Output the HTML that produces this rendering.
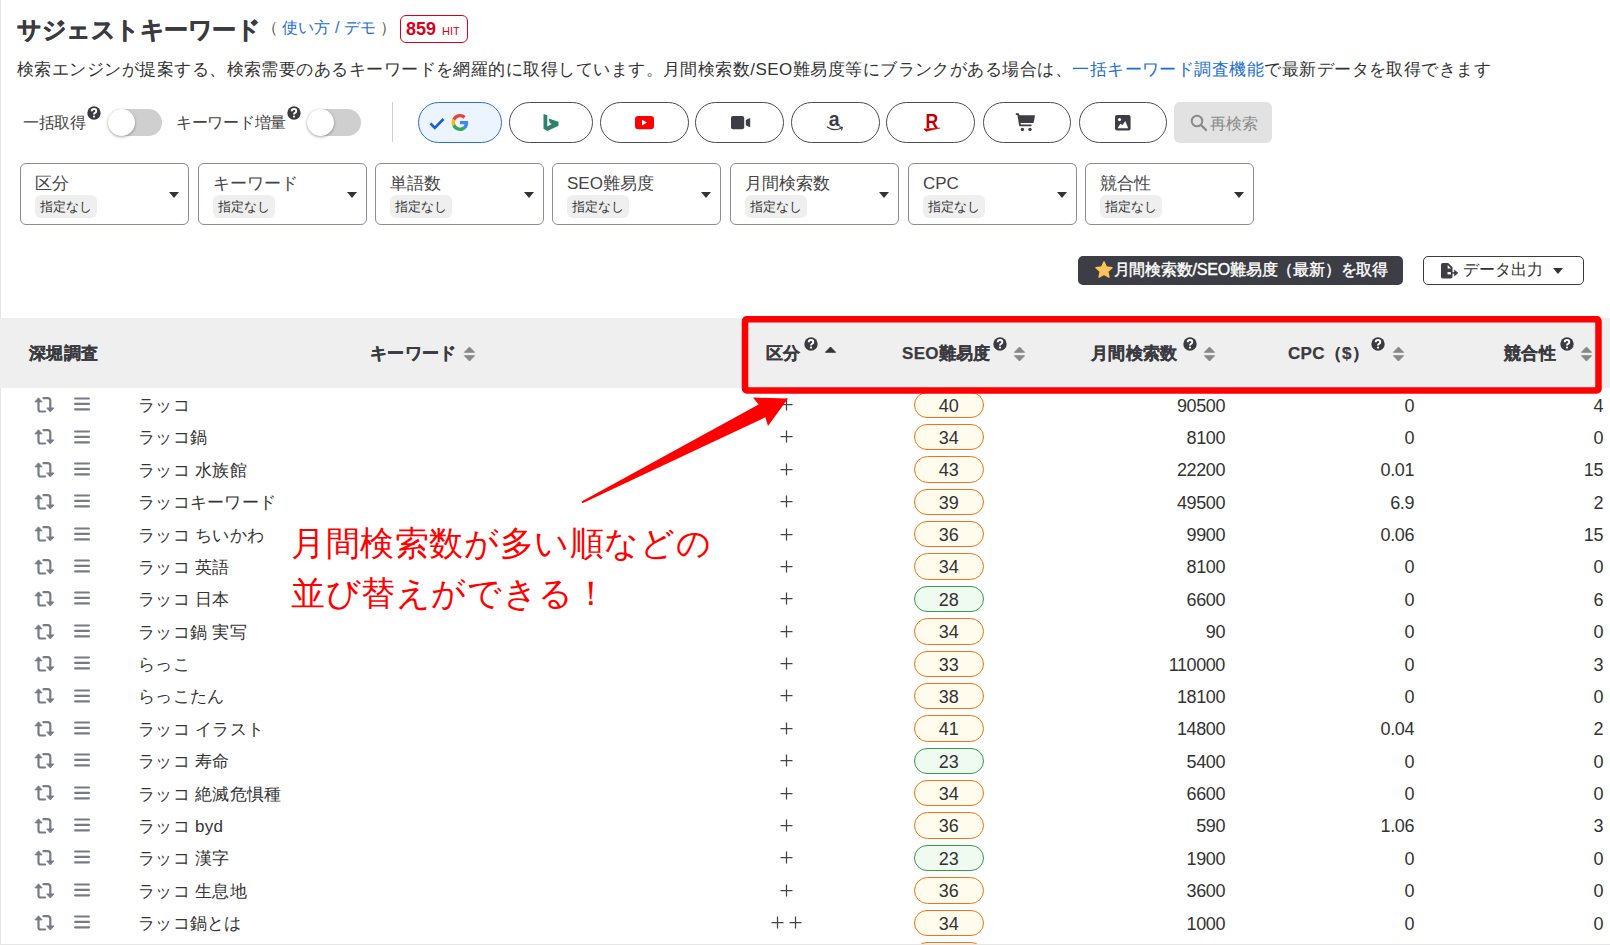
<!DOCTYPE html>
<html><head><meta charset="utf-8">
<style>
*{box-sizing:border-box;margin:0;padding:0}
html,body{width:1610px;height:945px;overflow:hidden;background:#fff}
body{position:relative;font-family:"Liberation Sans",sans-serif;color:#333}
.a{position:absolute;white-space:nowrap;line-height:1}
.ic{position:absolute}
#lb{position:absolute;left:0;top:0;width:1px;height:945px;background:#e4e4e4}
#bb{position:absolute;left:0;top:944px;width:1610px;height:1px;background:#e6e6e6}
.title{left:17px;top:18.5px;font-size:23.7px;letter-spacing:-0.5px;font-weight:bold;color:#3a3a40;-webkit-text-stroke:0.5px #3a3a40}
.help{left:262px;top:20px;font-size:16px;color:#1e6fd0}
.help span{color:#555}
.badge{position:absolute;left:400px;top:15px;width:68px;height:28px;border:1.5px solid #d9001b;border-radius:6px}
.b859{left:406px;top:20px;font-size:18px;font-weight:bold;color:#d9001b}
.bhit{left:442px;top:26px;font-size:11px;color:#d9001b}
.desc{left:17px;top:61px;font-size:17px;letter-spacing:0.46px;color:#333}
.desc a{color:#1e6fd0;text-decoration:none}
.tgl{position:absolute;top:109px;width:54px;height:27px;border-radius:14px;background:#cfcfcf}
.tgl::after{content:"";position:absolute;left:0;top:0;width:27px;height:27px;border-radius:50%;background:#fff;box-shadow:0 1px 3px rgba(0,0,0,.35)}
.tl{top:115px;font-size:16px;letter-spacing:-0.3px;color:#444}
.q{position:absolute;width:13px;height:13px;border-radius:50%;background:#3a3a40;color:#fff;font-size:10px;font-weight:bold;text-align:center;line-height:13px}
.div{position:absolute;left:392px;top:102px;width:1px;height:40px;background:#d0d0d0}
.eb{position:absolute;top:102px;height:41px;border:1.3px solid #4a4a50;border-radius:21px;background:#fff}
.eb.on{border-color:#2a6fdb;background:#ecf4ff}
.re{position:absolute;left:1174px;top:102px;width:98px;height:41px;border-radius:6px;background:#e2e2e2}
.ret{left:1210px;top:115.5px;font-size:16px;color:#8a8a8a}
.flt{position:absolute;top:163px;width:169px;height:62px;border:1.3px solid #8c8c96;border-radius:6px}
.fl{position:absolute;left:14px;top:11px;font-size:17px;line-height:1;color:#444;white-space:nowrap}
.chip{position:absolute;left:14px;top:31px;width:62px;height:23px;border-radius:6px;background:#efefef;font-size:13px;line-height:23px;text-align:center;color:#333;white-space:nowrap}
.caret{position:absolute;left:148px;top:28px;width:0;height:0;border-left:5px solid transparent;border-right:5px solid transparent;border-top:6px solid #333}
.dbtn{position:absolute;left:1078px;top:256px;width:325px;height:29px;border-radius:5px;background:#3d3d45}
.dbt{left:1113.5px;top:262px;font-size:16px;letter-spacing:-0.2px;color:#fff;-webkit-text-stroke:0.4px #fff}
.obtn{position:absolute;left:1423px;top:256px;width:161px;height:29px;border-radius:5px;border:1.2px solid #3a3a40;background:#fff}
.obt{left:1463px;top:262px;font-size:16px;color:#333}
.thead{position:absolute;left:0;top:318px;width:1610px;height:70px;background:#efefef}
.th{top:345px;font-size:17px;font-weight:bold;letter-spacing:0.3px;color:#3a3a40;-webkit-text-stroke:0.25px #3a3a40}
.sort{position:absolute;width:13px;height:16px}
.row{position:absolute;left:0;width:1610px;height:32.375px}
.kw{position:absolute;left:138px;top:9px;font-size:17px;letter-spacing:0.3px;line-height:1;color:#333;white-space:nowrap}
.kb{position:absolute;left:770px;width:34px;top:7px;font-size:18px;line-height:1;color:#333;text-align:center;white-space:nowrap}
.seo{position:absolute;left:914px;top:3.6px;width:69.5px;height:26.3px;border-radius:13.5px;border:1.5px solid #f07416;background:#fffcee;font-size:18px;line-height:26.5px;text-align:center;color:#333}
.seo.g{border-color:#3a9a4a;background:#effaf0}
.num{position:absolute;top:8.5px;font-size:18px;letter-spacing:-0.4px;line-height:1;color:#333;text-align:right;white-space:nowrap}
.vol{right:385px}
.cpc{right:196px}
.comp{right:7px}
#ann{position:absolute;left:0;top:0}
.ann{left:291px;font-size:34px;letter-spacing:0.6px;color:#f00}
</style></head><body>
<div id="lb"></div>
<div class="a title">サジェストキーワード</div>
<div class="a help"><span>（</span> 使い方 / デモ <span>）</span></div>
<div class="badge"></div>
<div class="a b859">859</div>
<div class="a bhit">HIT</div>
<div class="a desc">検索エンジンが提案する、検索需要のあるキーワードを網羅的に取得しています。月間検索数/SEO難易度等にブランクがある場合は、<a>一括キーワード調査機能</a>で最新データを取得できます</div>

<div class="a tl" style="left:23px">一括取得</div>
<svg class="ic" style="left:87px;top:106px" width="14" height="14" viewBox="0 0 14 14"><circle cx="7" cy="7" r="6.7" fill="#3a3a42"/><path d="M4.7 5.3Q4.7 3 7 3Q9.3 3 9.3 5Q9.3 6.3 8 6.9Q7 7.4 7 8.4" fill="none" stroke="#fff" stroke-width="1.9"/><circle cx="7" cy="10.6" r="1.15" fill="#fff"/></svg>
<div class="tgl" style="left:108px"></div>
<div class="a tl" style="left:176px">キーワード増量</div>
<svg class="ic" style="left:287px;top:106px" width="14" height="14" viewBox="0 0 14 14"><circle cx="7" cy="7" r="6.7" fill="#3a3a42"/><path d="M4.7 5.3Q4.7 3 7 3Q9.3 3 9.3 5Q9.3 6.3 8 6.9Q7 7.4 7 8.4" fill="none" stroke="#fff" stroke-width="1.9"/><circle cx="7" cy="10.6" r="1.15" fill="#fff"/></svg>
<div class="tgl" style="left:307px"></div>
<div class="div"></div>

<div class="eb on" style="left:418px;width:84px"></div>
<svg class="ic" style="left:429px;top:117px" width="16" height="13" viewBox="0 0 16 13"><path d="M1.5 6.5L5.8 10.8L14.5 2" fill="none" stroke="#1a5fd0" stroke-width="2.6"/></svg>
<svg class="ic" style="left:451px;top:114px" width="18" height="17" viewBox="0 0 48 48"><path fill="#EA4335" d="M24 9.5c3.54 0 6.71 1.22 9.21 3.6l6.85-6.850C35.9 2.38 30.47 0 24 0 14.62 0 6.51 5.38 2.56 13.22l7.98 6.19C12.43 13.72 17.74 9.5 24 9.5z"/><path fill="#4285F4" d="M46.98 24.55c0-1.57-.15-3.090-.38-4.55H24v9.02h12.940c-.58 2.96-2.26 5.48-4.78 7.18l7.73 6c4.51-4.18 7.09-10.36 7.09-17.65z"/><path fill="#FBBC05" d="M10.53 28.59c-.48-1.45-.76-2.99-.76-4.59s.27-3.14.76-4.59l-7.98-6.19C.92 16.46 0 20.12 0 24c0 3.88.92 7.54 2.56 10.78l7.97-6.19z"/><path fill="#34A853" d="M24 48c6.48 0 11.93-2.13 15.89-5.81l-7.730-6c-2.15 1.45-4.92 2.3-8.16 2.3-6.26 0-11.57-4.22-13.47-9.91l-7.98 6.19C6.51 42.62 14.62 48 24 48z"/></svg>

<div class="eb" style="left:509px;width:84px"></div>
<svg class="ic" style="left:543px;top:114px" width="16" height="17" viewBox="0 0 15 17"><path d="M0 0L3.8 1.3V12.6L8.2 10.1L6.3 8.9L5.1 4.6L15 7.7V11.7L3.8 17L0 14.8Z" fill="#2e8070"/></svg>

<div class="eb" style="left:600px;width:89px"></div>
<svg class="ic" style="left:635px;top:116px" width="19" height="14" viewBox="0 0 19 14"><rect x="0" y="0" width="19" height="13.2" rx="3.2" fill="#f00"/><path d="M7 3.8L12 6.6L7 9.4Z" fill="#fff"/></svg>

<div class="eb" style="left:695px;width:89px"></div>
<svg class="ic" style="left:731px;top:116px" width="20" height="14" viewBox="0 0 20 14"><rect x="0" y="0" width="13.2" height="13.2" rx="2" fill="#3d3d45"/><path d="M14.8 4L18.4 2.2Q19.2 2 19.2 3V10.3Q19.2 11.2 18.4 11L14.8 9.2Z" fill="#3d3d45"/></svg>

<div class="eb" style="left:791px;width:89px"></div>
<svg class="ic" style="left:826px;top:112px" width="18" height="20" viewBox="0 0 18 20"><text x="2.7" y="14" font-family="Liberation Sans" font-weight="bold" font-size="19.5" fill="#3d3d45">a</text><path d="M1.3 15Q8.5 20 15.8 15.7" fill="none" stroke="#3d3d45" stroke-width="1.3" stroke-linecap="round"/><path d="M13.6 14.9L16.3 15.5L15.6 18" fill="none" stroke="#3d3d45" stroke-width="1.1" stroke-linecap="round"/></svg>

<div class="eb" style="left:886px;width:89px"></div>
<svg class="ic" style="left:922px;top:111px" width="20" height="22" viewBox="0 0 20 22"><text x="0" y="17" transform="translate(3.6 0) scale(0.88 1)" font-family="Liberation Sans" font-weight="bold" font-size="20" fill="#bf0000">R</text><path d="M1.8 17.9L17.8 17.1L4 20.3Z" fill="#bf0000" stroke="#bf0000" stroke-width="0.6" stroke-linejoin="round"/></svg>

<div class="eb" style="left:983px;width:88px"></div>
<svg class="ic" style="left:1015px;top:113px" width="21" height="19" viewBox="0 0 21 19"><path d="M0.8 1.1H3.2L5 12.3H16.5" fill="none" stroke="#3d3d45" stroke-width="1.8" stroke-linejoin="round"/><path d="M3.6 2.2H20L18.8 9.2Q18.6 10 17.8 10H4.8Z" fill="#3d3d45"/><circle cx="7.4" cy="16.4" r="1.7" fill="#3d3d45"/><circle cx="15" cy="16.4" r="1.7" fill="#3d3d45"/></svg>

<div class="eb" style="left:1079px;width:88px"></div>
<svg class="ic" style="left:1115px;top:115px" width="16" height="16" viewBox="0 0 16 16"><rect x="0" y="0" width="15.6" height="15.4" rx="2" fill="#3d3d45"/><circle cx="4.5" cy="4.6" r="1.6" fill="#fff"/><path d="M2.6 13.2L5.5 8.4L7.4 10.3L10.3 6L13.2 13.2Z" fill="#fff"/></svg>

<div class="re"></div>
<svg class="ic" style="left:1190px;top:114px" width="18" height="18" viewBox="0 0 18 18"><circle cx="7" cy="7" r="5.3" fill="none" stroke="#8a8a8a" stroke-width="2"/><path d="M11 11L16 16" stroke="#8a8a8a" stroke-width="2.4" stroke-linecap="round"/></svg>
<div class="a ret">再検索</div>

<div class="flt" style="left:20px"><div class="fl">区分</div><div class="chip">指定なし</div><div class="caret"></div></div>
<div class="flt" style="left:198px"><div class="fl">キーワード</div><div class="chip">指定なし</div><div class="caret"></div></div>
<div class="flt" style="left:375px"><div class="fl">単語数</div><div class="chip">指定なし</div><div class="caret"></div></div>
<div class="flt" style="left:552px"><div class="fl">SEO難易度</div><div class="chip">指定なし</div><div class="caret"></div></div>
<div class="flt" style="left:730px"><div class="fl">月間検索数</div><div class="chip">指定なし</div><div class="caret"></div></div>
<div class="flt" style="left:908px"><div class="fl">CPC</div><div class="chip">指定なし</div><div class="caret"></div></div>
<div class="flt" style="left:1085px"><div class="fl">競合性</div><div class="chip">指定なし</div><div class="caret"></div></div>

<div class="dbtn"></div>
<svg class="ic" style="left:1095px;top:261px" width="18" height="18" viewBox="0 0 17.4 17.4"><path d="M8.70 0.80 L10.99 5.84 L16.50 6.47 L12.41 10.21 L13.52 15.63 L8.70 12.90 L3.88 15.63 L4.99 10.21 L0.90 6.47 L6.41 5.84Z" fill="#fbc35a" stroke="#fbc35a" stroke-width="1.3" stroke-linejoin="round"/></svg>
<div class="a dbt">月間検索数/SEO難易度（最新）を取得</div>
<div class="obtn"></div>
<svg class="ic" style="left:1441px;top:263px" width="18" height="16" viewBox="0 0 18 16"><path d="M1.8 0H7.2L11.5 4.3V13.8Q11.5 15.6 9.7 15.6H1.8Q0 15.6 0 13.8V1.8Q0 0 1.8 0Z" fill="#3d3d45"/><path d="M6.7 2V5.6H10Z" fill="#fff"/><rect x="6.5" y="9.1" width="3.5" height="2.3" fill="#fff"/><rect x="9.8" y="9.2" width="4.5" height="1.5" fill="#3d3d45"/><path d="M13.4 7L16.9 9.95L13.4 12.9Z" fill="#3d3d45" stroke="#3d3d45" stroke-width="0.6" stroke-linejoin="round"/></svg>
<div class="a obt">データ出力</div>
<div class="caret" style="left:1553px;top:268px"></div>

<div class="thead"></div>
<div class="a th" style="left:29px">深堀調査</div>
<div class="a th" style="left:370px">キーワード</div>
<svg class="sort" style="left:463px;top:346px" viewBox="0 0 13 16"><path d="M6.5 1L11.6 6.3H1.4Z M6.5 15L11.6 9.7H1.4Z" fill="#888" stroke="#888" stroke-width="0.9" stroke-linejoin="round"/></svg>
<div class="a th" style="left:766px">区分</div>
<svg class="ic" style="left:804px;top:337px" width="14" height="14" viewBox="0 0 14 14"><circle cx="7" cy="7" r="6.7" fill="#3a3a42"/><path d="M4.7 5.3Q4.7 3 7 3Q9.3 3 9.3 5Q9.3 6.3 8 6.9Q7 7.4 7 8.4" fill="none" stroke="#fff" stroke-width="1.9"/><circle cx="7" cy="10.6" r="1.15" fill="#fff"/></svg>
<svg class="sort" style="left:824px;top:346px" viewBox="0 0 13 16"><path d="M6.5 1L11.6 6.3H1.4Z" fill="#333" stroke="#333" stroke-width="0.9" stroke-linejoin="round"/></svg>
<div class="a th" style="left:902px">SEO難易度</div>
<svg class="ic" style="left:993px;top:337px" width="14" height="14" viewBox="0 0 14 14"><circle cx="7" cy="7" r="6.7" fill="#3a3a42"/><path d="M4.7 5.3Q4.7 3 7 3Q9.3 3 9.3 5Q9.3 6.3 8 6.9Q7 7.4 7 8.4" fill="none" stroke="#fff" stroke-width="1.9"/><circle cx="7" cy="10.6" r="1.15" fill="#fff"/></svg>
<svg class="sort" style="left:1013px;top:346px" viewBox="0 0 13 16"><path d="M6.5 1L11.6 6.3H1.4Z M6.5 15L11.6 9.7H1.4Z" fill="#888" stroke="#888" stroke-width="0.9" stroke-linejoin="round"/></svg>
<div class="a th" style="left:1091px">月間検索数</div>
<svg class="ic" style="left:1183px;top:337px" width="14" height="14" viewBox="0 0 14 14"><circle cx="7" cy="7" r="6.7" fill="#3a3a42"/><path d="M4.7 5.3Q4.7 3 7 3Q9.3 3 9.3 5Q9.3 6.3 8 6.9Q7 7.4 7 8.4" fill="none" stroke="#fff" stroke-width="1.9"/><circle cx="7" cy="10.6" r="1.15" fill="#fff"/></svg>
<svg class="sort" style="left:1203px;top:346px" viewBox="0 0 13 16"><path d="M6.5 1L11.6 6.3H1.4Z M6.5 15L11.6 9.7H1.4Z" fill="#888" stroke="#888" stroke-width="0.9" stroke-linejoin="round"/></svg>
<div class="a th" style="left:1288px">CPC（$）</div>
<svg class="ic" style="left:1371px;top:337px" width="14" height="14" viewBox="0 0 14 14"><circle cx="7" cy="7" r="6.7" fill="#3a3a42"/><path d="M4.7 5.3Q4.7 3 7 3Q9.3 3 9.3 5Q9.3 6.3 8 6.9Q7 7.4 7 8.4" fill="none" stroke="#fff" stroke-width="1.9"/><circle cx="7" cy="10.6" r="1.15" fill="#fff"/></svg>
<svg class="sort" style="left:1392px;top:346px" viewBox="0 0 13 16"><path d="M6.5 1L11.6 6.3H1.4Z M6.5 15L11.6 9.7H1.4Z" fill="#888" stroke="#888" stroke-width="0.9" stroke-linejoin="round"/></svg>
<div class="a th" style="left:1504px">競合性</div>
<svg class="ic" style="left:1560px;top:337px" width="14" height="14" viewBox="0 0 14 14"><circle cx="7" cy="7" r="6.7" fill="#3a3a42"/><path d="M4.7 5.3Q4.7 3 7 3Q9.3 3 9.3 5Q9.3 6.3 8 6.9Q7 7.4 7 8.4" fill="none" stroke="#fff" stroke-width="1.9"/><circle cx="7" cy="10.6" r="1.15" fill="#fff"/></svg>
<svg class="sort" style="left:1580px;top:346px" viewBox="0 0 13 16"><path d="M6.5 1L11.6 6.3H1.4Z M6.5 15L11.6 9.7H1.4Z" fill="#888" stroke="#888" stroke-width="0.9" stroke-linejoin="round"/></svg>

<div class="row" style="top:388.0px">
<svg class="ic" style="left:34px;top:8.9px" width="21" height="16" viewBox="0 0 21 16"><path d="M4.5 3.5V12.2a2.3 2.3 0 0 0 2.3 2.3H11" fill="none" stroke="#777a88" stroke-width="2.2" stroke-linecap="round"/><path d="M0.9 4.9L4.5 0.8L8.1 4.9Z" fill="#777a88" stroke="#777a88" stroke-width="0.8" stroke-linejoin="round"/><path d="M9.5 1.2H14a2.3 2.3 0 0 1 2.3 2.3V11.5" fill="none" stroke="#777a88" stroke-width="2.2" stroke-linecap="round"/><path d="M12.7 10.9L16.3 15L19.9 10.9Z" fill="#777a88" stroke="#777a88" stroke-width="0.8" stroke-linejoin="round"/></svg>
<svg class="ic" style="left:74px;top:9.2px" width="17" height="14" viewBox="0 0 17 14"><path d="M1.2 1.5H14.9M1.2 6.9H14.9M1.2 12.4H14.9" stroke="#777a88" stroke-width="2.2" stroke-linecap="round"/></svg>
<div class="kw">ラッコ</div>
<svg class="ic" style="left:780px;top:10px" width="13" height="13" viewBox="0 0 13 13"><path d="M6.5 0.5V12.5M0.5 6.5H12.5" stroke="#444" stroke-width="1.25"/></svg>
<div class="seo o">40</div>
<div class="num vol">90500</div><div class="num cpc">0</div><div class="num comp">4</div>
</div>
<div class="row" style="top:420.375px">
<svg class="ic" style="left:34px;top:8.9px" width="21" height="16" viewBox="0 0 21 16"><path d="M4.5 3.5V12.2a2.3 2.3 0 0 0 2.3 2.3H11" fill="none" stroke="#777a88" stroke-width="2.2" stroke-linecap="round"/><path d="M0.9 4.9L4.5 0.8L8.1 4.9Z" fill="#777a88" stroke="#777a88" stroke-width="0.8" stroke-linejoin="round"/><path d="M9.5 1.2H14a2.3 2.3 0 0 1 2.3 2.3V11.5" fill="none" stroke="#777a88" stroke-width="2.2" stroke-linecap="round"/><path d="M12.7 10.9L16.3 15L19.9 10.9Z" fill="#777a88" stroke="#777a88" stroke-width="0.8" stroke-linejoin="round"/></svg>
<svg class="ic" style="left:74px;top:9.2px" width="17" height="14" viewBox="0 0 17 14"><path d="M1.2 1.5H14.9M1.2 6.9H14.9M1.2 12.4H14.9" stroke="#777a88" stroke-width="2.2" stroke-linecap="round"/></svg>
<div class="kw">ラッコ鍋</div>
<svg class="ic" style="left:780px;top:10px" width="13" height="13" viewBox="0 0 13 13"><path d="M6.5 0.5V12.5M0.5 6.5H12.5" stroke="#444" stroke-width="1.25"/></svg>
<div class="seo o">34</div>
<div class="num vol">8100</div><div class="num cpc">0</div><div class="num comp">0</div>
</div>
<div class="row" style="top:452.75px">
<svg class="ic" style="left:34px;top:8.9px" width="21" height="16" viewBox="0 0 21 16"><path d="M4.5 3.5V12.2a2.3 2.3 0 0 0 2.3 2.3H11" fill="none" stroke="#777a88" stroke-width="2.2" stroke-linecap="round"/><path d="M0.9 4.9L4.5 0.8L8.1 4.9Z" fill="#777a88" stroke="#777a88" stroke-width="0.8" stroke-linejoin="round"/><path d="M9.5 1.2H14a2.3 2.3 0 0 1 2.3 2.3V11.5" fill="none" stroke="#777a88" stroke-width="2.2" stroke-linecap="round"/><path d="M12.7 10.9L16.3 15L19.9 10.9Z" fill="#777a88" stroke="#777a88" stroke-width="0.8" stroke-linejoin="round"/></svg>
<svg class="ic" style="left:74px;top:9.2px" width="17" height="14" viewBox="0 0 17 14"><path d="M1.2 1.5H14.9M1.2 6.9H14.9M1.2 12.4H14.9" stroke="#777a88" stroke-width="2.2" stroke-linecap="round"/></svg>
<div class="kw">ラッコ 水族館</div>
<svg class="ic" style="left:780px;top:10px" width="13" height="13" viewBox="0 0 13 13"><path d="M6.5 0.5V12.5M0.5 6.5H12.5" stroke="#444" stroke-width="1.25"/></svg>
<div class="seo o">43</div>
<div class="num vol">22200</div><div class="num cpc">0.01</div><div class="num comp">15</div>
</div>
<div class="row" style="top:485.125px">
<svg class="ic" style="left:34px;top:8.9px" width="21" height="16" viewBox="0 0 21 16"><path d="M4.5 3.5V12.2a2.3 2.3 0 0 0 2.3 2.3H11" fill="none" stroke="#777a88" stroke-width="2.2" stroke-linecap="round"/><path d="M0.9 4.9L4.5 0.8L8.1 4.9Z" fill="#777a88" stroke="#777a88" stroke-width="0.8" stroke-linejoin="round"/><path d="M9.5 1.2H14a2.3 2.3 0 0 1 2.3 2.3V11.5" fill="none" stroke="#777a88" stroke-width="2.2" stroke-linecap="round"/><path d="M12.7 10.9L16.3 15L19.9 10.9Z" fill="#777a88" stroke="#777a88" stroke-width="0.8" stroke-linejoin="round"/></svg>
<svg class="ic" style="left:74px;top:9.2px" width="17" height="14" viewBox="0 0 17 14"><path d="M1.2 1.5H14.9M1.2 6.9H14.9M1.2 12.4H14.9" stroke="#777a88" stroke-width="2.2" stroke-linecap="round"/></svg>
<div class="kw">ラッコキーワード</div>
<svg class="ic" style="left:780px;top:10px" width="13" height="13" viewBox="0 0 13 13"><path d="M6.5 0.5V12.5M0.5 6.5H12.5" stroke="#444" stroke-width="1.25"/></svg>
<div class="seo o">39</div>
<div class="num vol">49500</div><div class="num cpc">6.9</div><div class="num comp">2</div>
</div>
<div class="row" style="top:517.5px">
<svg class="ic" style="left:34px;top:8.9px" width="21" height="16" viewBox="0 0 21 16"><path d="M4.5 3.5V12.2a2.3 2.3 0 0 0 2.3 2.3H11" fill="none" stroke="#777a88" stroke-width="2.2" stroke-linecap="round"/><path d="M0.9 4.9L4.5 0.8L8.1 4.9Z" fill="#777a88" stroke="#777a88" stroke-width="0.8" stroke-linejoin="round"/><path d="M9.5 1.2H14a2.3 2.3 0 0 1 2.3 2.3V11.5" fill="none" stroke="#777a88" stroke-width="2.2" stroke-linecap="round"/><path d="M12.7 10.9L16.3 15L19.9 10.9Z" fill="#777a88" stroke="#777a88" stroke-width="0.8" stroke-linejoin="round"/></svg>
<svg class="ic" style="left:74px;top:9.2px" width="17" height="14" viewBox="0 0 17 14"><path d="M1.2 1.5H14.9M1.2 6.9H14.9M1.2 12.4H14.9" stroke="#777a88" stroke-width="2.2" stroke-linecap="round"/></svg>
<div class="kw">ラッコ ちいかわ</div>
<svg class="ic" style="left:780px;top:10px" width="13" height="13" viewBox="0 0 13 13"><path d="M6.5 0.5V12.5M0.5 6.5H12.5" stroke="#444" stroke-width="1.25"/></svg>
<div class="seo o">36</div>
<div class="num vol">9900</div><div class="num cpc">0.06</div><div class="num comp">15</div>
</div>
<div class="row" style="top:549.875px">
<svg class="ic" style="left:34px;top:8.9px" width="21" height="16" viewBox="0 0 21 16"><path d="M4.5 3.5V12.2a2.3 2.3 0 0 0 2.3 2.3H11" fill="none" stroke="#777a88" stroke-width="2.2" stroke-linecap="round"/><path d="M0.9 4.9L4.5 0.8L8.1 4.9Z" fill="#777a88" stroke="#777a88" stroke-width="0.8" stroke-linejoin="round"/><path d="M9.5 1.2H14a2.3 2.3 0 0 1 2.3 2.3V11.5" fill="none" stroke="#777a88" stroke-width="2.2" stroke-linecap="round"/><path d="M12.7 10.9L16.3 15L19.9 10.9Z" fill="#777a88" stroke="#777a88" stroke-width="0.8" stroke-linejoin="round"/></svg>
<svg class="ic" style="left:74px;top:9.2px" width="17" height="14" viewBox="0 0 17 14"><path d="M1.2 1.5H14.9M1.2 6.9H14.9M1.2 12.4H14.9" stroke="#777a88" stroke-width="2.2" stroke-linecap="round"/></svg>
<div class="kw">ラッコ 英語</div>
<svg class="ic" style="left:780px;top:10px" width="13" height="13" viewBox="0 0 13 13"><path d="M6.5 0.5V12.5M0.5 6.5H12.5" stroke="#444" stroke-width="1.25"/></svg>
<div class="seo o">34</div>
<div class="num vol">8100</div><div class="num cpc">0</div><div class="num comp">0</div>
</div>
<div class="row" style="top:582.25px">
<svg class="ic" style="left:34px;top:8.9px" width="21" height="16" viewBox="0 0 21 16"><path d="M4.5 3.5V12.2a2.3 2.3 0 0 0 2.3 2.3H11" fill="none" stroke="#777a88" stroke-width="2.2" stroke-linecap="round"/><path d="M0.9 4.9L4.5 0.8L8.1 4.9Z" fill="#777a88" stroke="#777a88" stroke-width="0.8" stroke-linejoin="round"/><path d="M9.5 1.2H14a2.3 2.3 0 0 1 2.3 2.3V11.5" fill="none" stroke="#777a88" stroke-width="2.2" stroke-linecap="round"/><path d="M12.7 10.9L16.3 15L19.9 10.9Z" fill="#777a88" stroke="#777a88" stroke-width="0.8" stroke-linejoin="round"/></svg>
<svg class="ic" style="left:74px;top:9.2px" width="17" height="14" viewBox="0 0 17 14"><path d="M1.2 1.5H14.9M1.2 6.9H14.9M1.2 12.4H14.9" stroke="#777a88" stroke-width="2.2" stroke-linecap="round"/></svg>
<div class="kw">ラッコ 日本</div>
<svg class="ic" style="left:780px;top:10px" width="13" height="13" viewBox="0 0 13 13"><path d="M6.5 0.5V12.5M0.5 6.5H12.5" stroke="#444" stroke-width="1.25"/></svg>
<div class="seo g">28</div>
<div class="num vol">6600</div><div class="num cpc">0</div><div class="num comp">6</div>
</div>
<div class="row" style="top:614.625px">
<svg class="ic" style="left:34px;top:8.9px" width="21" height="16" viewBox="0 0 21 16"><path d="M4.5 3.5V12.2a2.3 2.3 0 0 0 2.3 2.3H11" fill="none" stroke="#777a88" stroke-width="2.2" stroke-linecap="round"/><path d="M0.9 4.9L4.5 0.8L8.1 4.9Z" fill="#777a88" stroke="#777a88" stroke-width="0.8" stroke-linejoin="round"/><path d="M9.5 1.2H14a2.3 2.3 0 0 1 2.3 2.3V11.5" fill="none" stroke="#777a88" stroke-width="2.2" stroke-linecap="round"/><path d="M12.7 10.9L16.3 15L19.9 10.9Z" fill="#777a88" stroke="#777a88" stroke-width="0.8" stroke-linejoin="round"/></svg>
<svg class="ic" style="left:74px;top:9.2px" width="17" height="14" viewBox="0 0 17 14"><path d="M1.2 1.5H14.9M1.2 6.9H14.9M1.2 12.4H14.9" stroke="#777a88" stroke-width="2.2" stroke-linecap="round"/></svg>
<div class="kw">ラッコ鍋 実写</div>
<svg class="ic" style="left:780px;top:10px" width="13" height="13" viewBox="0 0 13 13"><path d="M6.5 0.5V12.5M0.5 6.5H12.5" stroke="#444" stroke-width="1.25"/></svg>
<div class="seo o">34</div>
<div class="num vol">90</div><div class="num cpc">0</div><div class="num comp">0</div>
</div>
<div class="row" style="top:647.0px">
<svg class="ic" style="left:34px;top:8.9px" width="21" height="16" viewBox="0 0 21 16"><path d="M4.5 3.5V12.2a2.3 2.3 0 0 0 2.3 2.3H11" fill="none" stroke="#777a88" stroke-width="2.2" stroke-linecap="round"/><path d="M0.9 4.9L4.5 0.8L8.1 4.9Z" fill="#777a88" stroke="#777a88" stroke-width="0.8" stroke-linejoin="round"/><path d="M9.5 1.2H14a2.3 2.3 0 0 1 2.3 2.3V11.5" fill="none" stroke="#777a88" stroke-width="2.2" stroke-linecap="round"/><path d="M12.7 10.9L16.3 15L19.9 10.9Z" fill="#777a88" stroke="#777a88" stroke-width="0.8" stroke-linejoin="round"/></svg>
<svg class="ic" style="left:74px;top:9.2px" width="17" height="14" viewBox="0 0 17 14"><path d="M1.2 1.5H14.9M1.2 6.9H14.9M1.2 12.4H14.9" stroke="#777a88" stroke-width="2.2" stroke-linecap="round"/></svg>
<div class="kw">らっこ</div>
<svg class="ic" style="left:780px;top:10px" width="13" height="13" viewBox="0 0 13 13"><path d="M6.5 0.5V12.5M0.5 6.5H12.5" stroke="#444" stroke-width="1.25"/></svg>
<div class="seo o">33</div>
<div class="num vol">110000</div><div class="num cpc">0</div><div class="num comp">3</div>
</div>
<div class="row" style="top:679.375px">
<svg class="ic" style="left:34px;top:8.9px" width="21" height="16" viewBox="0 0 21 16"><path d="M4.5 3.5V12.2a2.3 2.3 0 0 0 2.3 2.3H11" fill="none" stroke="#777a88" stroke-width="2.2" stroke-linecap="round"/><path d="M0.9 4.9L4.5 0.8L8.1 4.9Z" fill="#777a88" stroke="#777a88" stroke-width="0.8" stroke-linejoin="round"/><path d="M9.5 1.2H14a2.3 2.3 0 0 1 2.3 2.3V11.5" fill="none" stroke="#777a88" stroke-width="2.2" stroke-linecap="round"/><path d="M12.7 10.9L16.3 15L19.9 10.9Z" fill="#777a88" stroke="#777a88" stroke-width="0.8" stroke-linejoin="round"/></svg>
<svg class="ic" style="left:74px;top:9.2px" width="17" height="14" viewBox="0 0 17 14"><path d="M1.2 1.5H14.9M1.2 6.9H14.9M1.2 12.4H14.9" stroke="#777a88" stroke-width="2.2" stroke-linecap="round"/></svg>
<div class="kw">らっこたん</div>
<svg class="ic" style="left:780px;top:10px" width="13" height="13" viewBox="0 0 13 13"><path d="M6.5 0.5V12.5M0.5 6.5H12.5" stroke="#444" stroke-width="1.25"/></svg>
<div class="seo o">38</div>
<div class="num vol">18100</div><div class="num cpc">0</div><div class="num comp">0</div>
</div>
<div class="row" style="top:711.75px">
<svg class="ic" style="left:34px;top:8.9px" width="21" height="16" viewBox="0 0 21 16"><path d="M4.5 3.5V12.2a2.3 2.3 0 0 0 2.3 2.3H11" fill="none" stroke="#777a88" stroke-width="2.2" stroke-linecap="round"/><path d="M0.9 4.9L4.5 0.8L8.1 4.9Z" fill="#777a88" stroke="#777a88" stroke-width="0.8" stroke-linejoin="round"/><path d="M9.5 1.2H14a2.3 2.3 0 0 1 2.3 2.3V11.5" fill="none" stroke="#777a88" stroke-width="2.2" stroke-linecap="round"/><path d="M12.7 10.9L16.3 15L19.9 10.9Z" fill="#777a88" stroke="#777a88" stroke-width="0.8" stroke-linejoin="round"/></svg>
<svg class="ic" style="left:74px;top:9.2px" width="17" height="14" viewBox="0 0 17 14"><path d="M1.2 1.5H14.9M1.2 6.9H14.9M1.2 12.4H14.9" stroke="#777a88" stroke-width="2.2" stroke-linecap="round"/></svg>
<div class="kw">ラッコ イラスト</div>
<svg class="ic" style="left:780px;top:10px" width="13" height="13" viewBox="0 0 13 13"><path d="M6.5 0.5V12.5M0.5 6.5H12.5" stroke="#444" stroke-width="1.25"/></svg>
<div class="seo o">41</div>
<div class="num vol">14800</div><div class="num cpc">0.04</div><div class="num comp">2</div>
</div>
<div class="row" style="top:744.125px">
<svg class="ic" style="left:34px;top:8.9px" width="21" height="16" viewBox="0 0 21 16"><path d="M4.5 3.5V12.2a2.3 2.3 0 0 0 2.3 2.3H11" fill="none" stroke="#777a88" stroke-width="2.2" stroke-linecap="round"/><path d="M0.9 4.9L4.5 0.8L8.1 4.9Z" fill="#777a88" stroke="#777a88" stroke-width="0.8" stroke-linejoin="round"/><path d="M9.5 1.2H14a2.3 2.3 0 0 1 2.3 2.3V11.5" fill="none" stroke="#777a88" stroke-width="2.2" stroke-linecap="round"/><path d="M12.7 10.9L16.3 15L19.9 10.9Z" fill="#777a88" stroke="#777a88" stroke-width="0.8" stroke-linejoin="round"/></svg>
<svg class="ic" style="left:74px;top:9.2px" width="17" height="14" viewBox="0 0 17 14"><path d="M1.2 1.5H14.9M1.2 6.9H14.9M1.2 12.4H14.9" stroke="#777a88" stroke-width="2.2" stroke-linecap="round"/></svg>
<div class="kw">ラッコ 寿命</div>
<svg class="ic" style="left:780px;top:10px" width="13" height="13" viewBox="0 0 13 13"><path d="M6.5 0.5V12.5M0.5 6.5H12.5" stroke="#444" stroke-width="1.25"/></svg>
<div class="seo g">23</div>
<div class="num vol">5400</div><div class="num cpc">0</div><div class="num comp">0</div>
</div>
<div class="row" style="top:776.5px">
<svg class="ic" style="left:34px;top:8.9px" width="21" height="16" viewBox="0 0 21 16"><path d="M4.5 3.5V12.2a2.3 2.3 0 0 0 2.3 2.3H11" fill="none" stroke="#777a88" stroke-width="2.2" stroke-linecap="round"/><path d="M0.9 4.9L4.5 0.8L8.1 4.9Z" fill="#777a88" stroke="#777a88" stroke-width="0.8" stroke-linejoin="round"/><path d="M9.5 1.2H14a2.3 2.3 0 0 1 2.3 2.3V11.5" fill="none" stroke="#777a88" stroke-width="2.2" stroke-linecap="round"/><path d="M12.7 10.9L16.3 15L19.9 10.9Z" fill="#777a88" stroke="#777a88" stroke-width="0.8" stroke-linejoin="round"/></svg>
<svg class="ic" style="left:74px;top:9.2px" width="17" height="14" viewBox="0 0 17 14"><path d="M1.2 1.5H14.9M1.2 6.9H14.9M1.2 12.4H14.9" stroke="#777a88" stroke-width="2.2" stroke-linecap="round"/></svg>
<div class="kw">ラッコ 絶滅危惧種</div>
<svg class="ic" style="left:780px;top:10px" width="13" height="13" viewBox="0 0 13 13"><path d="M6.5 0.5V12.5M0.5 6.5H12.5" stroke="#444" stroke-width="1.25"/></svg>
<div class="seo o">34</div>
<div class="num vol">6600</div><div class="num cpc">0</div><div class="num comp">0</div>
</div>
<div class="row" style="top:808.875px">
<svg class="ic" style="left:34px;top:8.9px" width="21" height="16" viewBox="0 0 21 16"><path d="M4.5 3.5V12.2a2.3 2.3 0 0 0 2.3 2.3H11" fill="none" stroke="#777a88" stroke-width="2.2" stroke-linecap="round"/><path d="M0.9 4.9L4.5 0.8L8.1 4.9Z" fill="#777a88" stroke="#777a88" stroke-width="0.8" stroke-linejoin="round"/><path d="M9.5 1.2H14a2.3 2.3 0 0 1 2.3 2.3V11.5" fill="none" stroke="#777a88" stroke-width="2.2" stroke-linecap="round"/><path d="M12.7 10.9L16.3 15L19.9 10.9Z" fill="#777a88" stroke="#777a88" stroke-width="0.8" stroke-linejoin="round"/></svg>
<svg class="ic" style="left:74px;top:9.2px" width="17" height="14" viewBox="0 0 17 14"><path d="M1.2 1.5H14.9M1.2 6.9H14.9M1.2 12.4H14.9" stroke="#777a88" stroke-width="2.2" stroke-linecap="round"/></svg>
<div class="kw">ラッコ byd</div>
<svg class="ic" style="left:780px;top:10px" width="13" height="13" viewBox="0 0 13 13"><path d="M6.5 0.5V12.5M0.5 6.5H12.5" stroke="#444" stroke-width="1.25"/></svg>
<div class="seo o">36</div>
<div class="num vol">590</div><div class="num cpc">1.06</div><div class="num comp">3</div>
</div>
<div class="row" style="top:841.25px">
<svg class="ic" style="left:34px;top:8.9px" width="21" height="16" viewBox="0 0 21 16"><path d="M4.5 3.5V12.2a2.3 2.3 0 0 0 2.3 2.3H11" fill="none" stroke="#777a88" stroke-width="2.2" stroke-linecap="round"/><path d="M0.9 4.9L4.5 0.8L8.1 4.9Z" fill="#777a88" stroke="#777a88" stroke-width="0.8" stroke-linejoin="round"/><path d="M9.5 1.2H14a2.3 2.3 0 0 1 2.3 2.3V11.5" fill="none" stroke="#777a88" stroke-width="2.2" stroke-linecap="round"/><path d="M12.7 10.9L16.3 15L19.9 10.9Z" fill="#777a88" stroke="#777a88" stroke-width="0.8" stroke-linejoin="round"/></svg>
<svg class="ic" style="left:74px;top:9.2px" width="17" height="14" viewBox="0 0 17 14"><path d="M1.2 1.5H14.9M1.2 6.9H14.9M1.2 12.4H14.9" stroke="#777a88" stroke-width="2.2" stroke-linecap="round"/></svg>
<div class="kw">ラッコ 漢字</div>
<svg class="ic" style="left:780px;top:10px" width="13" height="13" viewBox="0 0 13 13"><path d="M6.5 0.5V12.5M0.5 6.5H12.5" stroke="#444" stroke-width="1.25"/></svg>
<div class="seo g">23</div>
<div class="num vol">1900</div><div class="num cpc">0</div><div class="num comp">0</div>
</div>
<div class="row" style="top:873.625px">
<svg class="ic" style="left:34px;top:8.9px" width="21" height="16" viewBox="0 0 21 16"><path d="M4.5 3.5V12.2a2.3 2.3 0 0 0 2.3 2.3H11" fill="none" stroke="#777a88" stroke-width="2.2" stroke-linecap="round"/><path d="M0.9 4.9L4.5 0.8L8.1 4.9Z" fill="#777a88" stroke="#777a88" stroke-width="0.8" stroke-linejoin="round"/><path d="M9.5 1.2H14a2.3 2.3 0 0 1 2.3 2.3V11.5" fill="none" stroke="#777a88" stroke-width="2.2" stroke-linecap="round"/><path d="M12.7 10.9L16.3 15L19.9 10.9Z" fill="#777a88" stroke="#777a88" stroke-width="0.8" stroke-linejoin="round"/></svg>
<svg class="ic" style="left:74px;top:9.2px" width="17" height="14" viewBox="0 0 17 14"><path d="M1.2 1.5H14.9M1.2 6.9H14.9M1.2 12.4H14.9" stroke="#777a88" stroke-width="2.2" stroke-linecap="round"/></svg>
<div class="kw">ラッコ 生息地</div>
<svg class="ic" style="left:780px;top:10px" width="13" height="13" viewBox="0 0 13 13"><path d="M6.5 0.5V12.5M0.5 6.5H12.5" stroke="#444" stroke-width="1.25"/></svg>
<div class="seo o">36</div>
<div class="num vol">3600</div><div class="num cpc">0</div><div class="num comp">0</div>
</div>
<div class="row" style="top:906.0px">
<svg class="ic" style="left:34px;top:8.9px" width="21" height="16" viewBox="0 0 21 16"><path d="M4.5 3.5V12.2a2.3 2.3 0 0 0 2.3 2.3H11" fill="none" stroke="#777a88" stroke-width="2.2" stroke-linecap="round"/><path d="M0.9 4.9L4.5 0.8L8.1 4.9Z" fill="#777a88" stroke="#777a88" stroke-width="0.8" stroke-linejoin="round"/><path d="M9.5 1.2H14a2.3 2.3 0 0 1 2.3 2.3V11.5" fill="none" stroke="#777a88" stroke-width="2.2" stroke-linecap="round"/><path d="M12.7 10.9L16.3 15L19.9 10.9Z" fill="#777a88" stroke="#777a88" stroke-width="0.8" stroke-linejoin="round"/></svg>
<svg class="ic" style="left:74px;top:9.2px" width="17" height="14" viewBox="0 0 17 14"><path d="M1.2 1.5H14.9M1.2 6.9H14.9M1.2 12.4H14.9" stroke="#777a88" stroke-width="2.2" stroke-linecap="round"/></svg>
<div class="kw">ラッコ鍋とは</div>
<svg class="ic" style="left:771px;top:10px" width="13" height="13" viewBox="0 0 13 13"><path d="M6.5 0.5V12.5M0.5 6.5H12.5" stroke="#444" stroke-width="1.25"/></svg><svg class="ic" style="left:789px;top:10px" width="13" height="13" viewBox="0 0 13 13"><path d="M6.5 0.5V12.5M0.5 6.5H12.5" stroke="#444" stroke-width="1.25"/></svg>
<div class="seo o">34</div>
<div class="num vol">1000</div><div class="num cpc">0</div><div class="num comp">0</div>
</div>
<div class="row" style="top:938.375px">
<div class="seo o">35</div>
</div>

<div id="bb"></div>
<svg id="ann" width="1610" height="945" viewBox="0 0 1610 945">
<rect x="745" y="319.3" width="853.5" height="71.3" rx="1.8" fill="none" stroke="#f00" stroke-width="6.5"/>
<path d="M581.5 501.5L758.6 404.6L753 397.6L788 398.6L768 426L765.3 417.3L582.5 503.2Z" fill="#f00"/>
</svg>
<div class="a ann" style="top:526px">月間検索数が多い順などの</div>
<div class="a ann" style="top:576px">並び替えができる！</div>
</body></html>
